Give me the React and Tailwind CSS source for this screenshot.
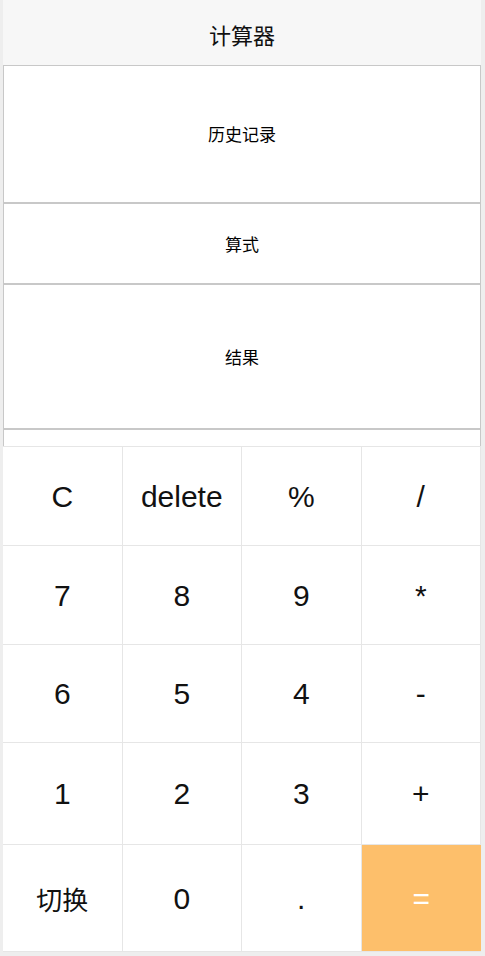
const KEYS = [
  ['C', 'delete', '%', '/'],
  ['7', '8', '9', '*'],
  ['6', '5', '4', '-'],
  ['1', '2', '3', '+'],
  ['切换', '0', '.', '='],
];

const cjk = { fontFamily: '"Noto Sans CJK SC", "Liberation Sans", sans-serif' };
const latin = { fontFamily: '"Liberation Sans", "Noto Sans CJK SC", sans-serif' };

function Key({ label }) {
  const isEq = label === '=';
  const isCjk = label === '切换';
  return (
    <div
      className={`flex items-center justify-center border-r border-b border-[#e6e6e6] last:border-r-0 ${
        isEq ? 'bg-[#fdbf6b] text-white' : 'bg-white text-[#111]'
      } ${isCjk ? 'text-[26px]' : 'text-[30px]'}`}
      style={isCjk ? cjk : latin}
    >
      {label}
    </div>
  );
}

export default function App() {
  return (
    <div className="min-h-[956px] w-[485px] bg-[#eeeeee] pl-[3px] pr-[4px]">
      <div className="flex w-[478px] flex-col" style={cjk}>
        {/* title bar */}
        <div className="flex h-[65px] items-center justify-center bg-[#f7f7f7] pt-[4px] text-[22px] text-[#111]">
          计算器
        </div>

        {/* display panels */}
        <div className="flex h-[138px] items-center justify-center border border-[#c8c8c8] bg-white text-[17px] text-black">
          历史记录
        </div>
        <div className="flex h-[81px] items-center justify-center border border-[#c8c8c8] bg-white text-[17px] text-black">
          算式
        </div>
        <div className="flex h-[145px] items-center justify-center border border-[#c8c8c8] bg-white text-[17px] text-black">
          结果
        </div>
        <div className="h-[17px] border border-b-0 border-[#c8c8c8] bg-white" />

        {/* keypad */}
        <div className="grid grid-cols-4 grid-rows-[99px_99px_98px_102px_107px] border-t border-[#e6e6e6] bg-white">
          {KEYS.flat().map((k) => (
            <Key key={k} label={k} />
          ))}
        </div>
      </div>
    </div>
  );
}
